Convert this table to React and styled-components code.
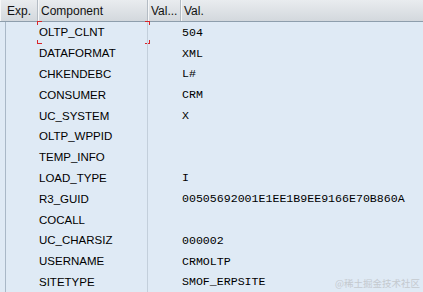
import React from 'react';
import styled, { createGlobalStyle } from 'styled-components';

const GlobalStyle = createGlobalStyle`
  html, body {
    margin: 0;
    padding: 0;
    background: #dfeaf5;
    overflow: hidden;
  }
`;

const Table = styled.div`
  position: relative;
  width: 423px;
  height: 292px;
  background: #dfeaf5;
  font-family: "Liberation Sans", Arial, sans-serif;
  overflow: hidden;
`;

const Header = styled.div`
  display: grid;
  grid-template-columns: 38px 110px 33px 1fr;
  height: 22px;
  background: linear-gradient(#e9ecef, #d3d8dd);
  border-bottom: 1px solid #8e9eac;
  box-sizing: border-box;
`;

const HeadCell = styled.div`
  display: flex;
  align-items: center;
  padding-left: ${p => p.$pad || 3}px;
  font-size: 12px;
  color: #111;
  border-right: 1px solid #b4bcc4;
  box-shadow: inset 1px 0 0 #f6f7f8;
  white-space: nowrap;
  overflow: hidden;

  &:last-child {
    border-right: none;
  }
`;

const Body = styled.div`
  margin-left: 5px;
  border-left: 1px solid #a9b8c7;
  height: 270px;
`;

const Row = styled.div`
  position: relative;
  display: grid;
  grid-template-columns: 32px 110px 33px 1fr;
  height: 20.8px;
  align-items: center;
`;

const ExpCell = styled.div``;

const NameCell = styled.div`
  display: flex;
  align-items: center;
  height: 100%;
  padding-left: 1px;
  font-size: 11.5px;
  color: #000;
  border-right: 1px solid #c3cfdb;
`;

const ShortCell = styled.div``;

const ValueCell = styled.div`
  font-family: "Liberation Mono", "Courier New", monospace;
  font-size: 11.6px;
  color: #000;
  padding-left: 1px;
  white-space: pre;
`;

const Focus = styled.div`
  position: absolute;
  left: 31px;
  top: -1px;
  width: 113px;
  height: 23px;
  pointer-events: none;
  --c: #d9252a;
  background:
    linear-gradient(var(--c), var(--c)) left top / 5px 1px,
    linear-gradient(var(--c), var(--c)) left top / 1px 4px,
    linear-gradient(var(--c), var(--c)) right top / 5px 1px,
    linear-gradient(var(--c), var(--c)) right top / 1px 4px,
    linear-gradient(var(--c), var(--c)) left bottom / 5px 1px,
    linear-gradient(var(--c), var(--c)) left bottom / 1px 4px,
    linear-gradient(var(--c), var(--c)) right bottom / 5px 1px,
    linear-gradient(var(--c), var(--c)) right bottom / 1px 4px;
  background-repeat: no-repeat;
`;

const Watermark = styled.div`
  position: absolute;
  right: 3px;
  bottom: 2px;
  font-family: "Noto Sans CJK SC", sans-serif;
  font-size: 9.5px;
  color: #c4c9cf;
`;

const rows = [
  ['OLTP_CLNT', '504'],
  ['DATAFORMAT', 'XML'],
  ['CHKENDEBC', 'L#'],
  ['CONSUMER', 'CRM'],
  ['UC_SYSTEM', 'X'],
  ['OLTP_WPPID', ''],
  ['TEMP_INFO', ''],
  ['LOAD_TYPE', 'I'],
  ['R3_GUID', '00505692001E1EE1B9EE9166E70B860A'],
  ['COCALL', ''],
  ['UC_CHARSIZ', '000002'],
  ['USERNAME', 'CRMOLTP'],
  ['SITETYPE', 'SMOF_ERPSITE'],
];

const App = () => (
  <Table>
    <GlobalStyle />
    <Header>
      <HeadCell $pad={7}>Exp.</HeadCell>
      <HeadCell>Component</HeadCell>
      <HeadCell>Val...</HeadCell>
      <HeadCell>Val.</HeadCell>
    </Header>
    <Body>
      {rows.map(([name, value], i) => (
        <Row key={name}>
          <ExpCell />
          <NameCell>{name}</NameCell>
          <ShortCell />
          <ValueCell>{value}</ValueCell>
          {i === 0 && <Focus />}
        </Row>
      ))}
    </Body>
    <Watermark>@稀土掘金技术社区</Watermark>
  </Table>
);

export default App;
